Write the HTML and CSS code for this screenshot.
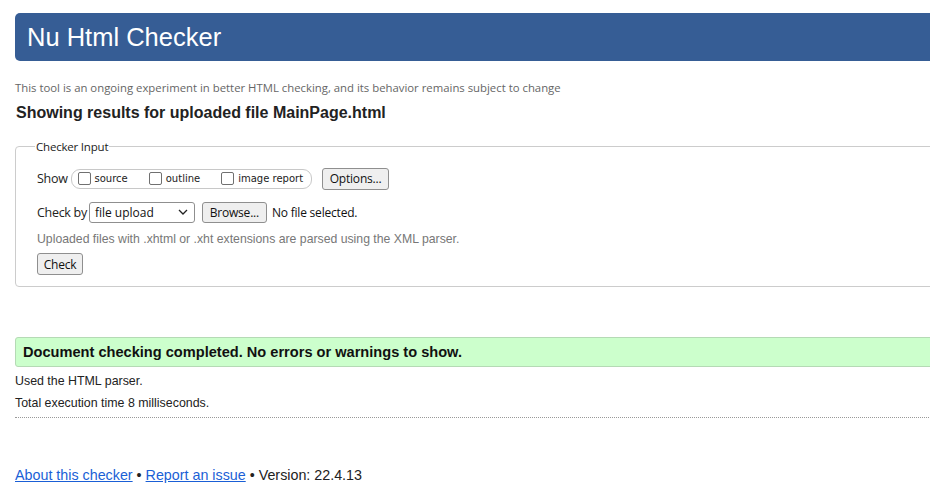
FILE: index.html
```html
<!DOCTYPE html>
<html lang="en">
<head>
<meta charset="utf-8">
<title>Showing results for uploaded file MainPage.html - Nu Html Checker</title>
<link rel="stylesheet" href="styles.css">
</head>
<body>
<div class="page">
  <h1 class="banner">Nu Html Checker</h1>
  <p class="intro">This tool is an ongoing experiment in better HTML checking, and its behavior remains subject to change</p>
  <h2 class="results-title">Showing results for uploaded file MainPage.html</h2>
  <form class="checker">
    <fieldset class="input-set">
      <legend class="legend">Checker Input</legend>
      <div class="row show-row">
        <span class="lbl">Show</span>
        <span class="pill">
          <label class="opt"><span class="box"></span>source</label>
          <label class="opt"><span class="box"></span>outline</label>
          <label class="opt"><span class="box"></span>image report</label>
        </span>
        <span class="btn options">Options...</span>
      </div>
      <div class="row by-row">
        <span class="lbl">Check by</span>
        <span class="select">file upload
          <svg class="chev" width="10" height="6" viewBox="0 0 10 6"><path d="M1 1l4 4 4-4" fill="none" stroke="#222" stroke-width="1.3"/></svg>
        </span>
        <span class="btn browse">Browse...</span>
        <span class="nofile">No file selected.</span>
      </div>
      <p class="note">Uploaded files with .xhtml or .xht extensions are parsed using the XML parser.</p>
      <span class="btn check">Check</span>
    </fieldset>
  </form>
  <div class="success">Document checking completed. No errors or warnings to show.</div>
  <p class="meta">Used the HTML parser.</p>
  <p class="meta">Total execution time 8 milliseconds.</p>
  <hr class="dots">
  <p class="footer"><a href="#">About this checker</a> • <a href="#">Report an issue</a> • Version: 22.4.13</p>
</div>
</body>
</html>
```
FILE: styles.css
```css
html, body { margin: 0; padding: 0; overflow: hidden; background: #fff; }
body { font-family: "Liberation Sans", Arial, sans-serif; color: #222; }
.page { width: 960px; padding: 13px 0 0 15px; }
.banner {
  margin: 0; height: 48px; box-sizing: border-box;
  background: #365d95; color: #fff; border-radius: 5px;
  font-weight: normal; font-size: 25.5px; line-height: 48px;
  padding-left: 12px;
}
.intro {
  margin: 20px 0 0 0; font-family: "Open Sans", sans-serif; font-size: 11.35px;
  color: #666; line-height: 14px;
}
.results-title {
  margin: 8px 0 0 1px; font-size: 16px; font-weight: bold; line-height: 20px; color: #222;
}
.checker { margin: 16px 0 0 0; }
.input-set {
  margin: 0; border: 1px solid #ccc; border-radius: 4px;
  padding: 13px 21px 11px 21px; min-width: 0;
}
.legend {
  font-family: "Open Sans", sans-serif; font-size: 11.5px; color: #222;
  padding: 0 1px; margin-left: -2px; letter-spacing: -0.2px;
}
.row { display: flex; align-items: center; }
.lbl { font-family: "Open Sans", sans-serif; font-size: 12.5px; color: #222; letter-spacing: -0.3px; }
.show-row { height: 23px; }
.pill {
  display: flex; align-items: center; height: 20px; box-sizing: border-box;
  border: 1px solid #c8c8c8; border-radius: 9px; margin-left: 3px; padding: 0 8px 0 6px;
}
.opt {
  display: flex; align-items: center; font-family: "DejaVu Sans", Verdana, sans-serif;
  font-size: 10px; color: #222; margin-right: 21px;
}
.opt:last-child { margin-right: 0; }
.box {
  width: 11px; height: 11px; border: 1px solid #707070; border-radius: 2px; margin-right: 4px; background: #fff;
}
.btn {
  display: inline-flex; align-items: center; justify-content: center; box-sizing: border-box;
  font-family: "Open Sans", sans-serif; font-size: 12px; color: #111;
  background: #efefef; border: 1px solid #8f8f8f; border-radius: 3px; letter-spacing: -0.2px;
}
.options { width: 67px; height: 22px; margin-left: 10px; }
.by-row { margin-top: 11px; height: 22px; }
.select {
  display: inline-flex; align-items: center; justify-content: space-between; box-sizing: border-box;
  width: 106px; height: 21px; margin-left: 2px; padding: 0 6px 0 5px;
  border: 1px solid #8f8f8f; border-radius: 3px; background: #fff;
  font-family: "Open Sans", sans-serif; font-size: 12px; color: #111;
}
.chev { display: block; }
.browse { width: 65px; height: 21px; margin-left: 7px; }
.nofile { font-family: "Open Sans", sans-serif; font-size: 12px; color: #111; margin-left: 5px; letter-spacing: -0.2px; }
.note { margin: 8px 0 0 0; font-size: 12.25px; color: #777; line-height: 17px; }
.check { width: 46px; height: 22px; margin-top: 5px; }
.success {
  margin-top: 50px; height: 30px; box-sizing: border-box;
  background: #ccffcc; border: 1px solid #b5dab5; border-radius: 3px;
  font-weight: bold; font-size: 14.6px; line-height: 28px; padding-left: 7px; color: #111;
}
.meta { margin: 0; font-size: 12.4px; line-height: 22px; color: #222; }
.success + .meta { margin-top: 3px; }
.dots { margin: 3px 0 0 0; border: 0; border-top: 1px dotted #999; height: 0; }
.footer { margin: 48px 0 0 0; font-size: 14.3px; color: #222; line-height: 18px; }
.footer a { color: #1a5fd6; text-decoration: underline; }
```
